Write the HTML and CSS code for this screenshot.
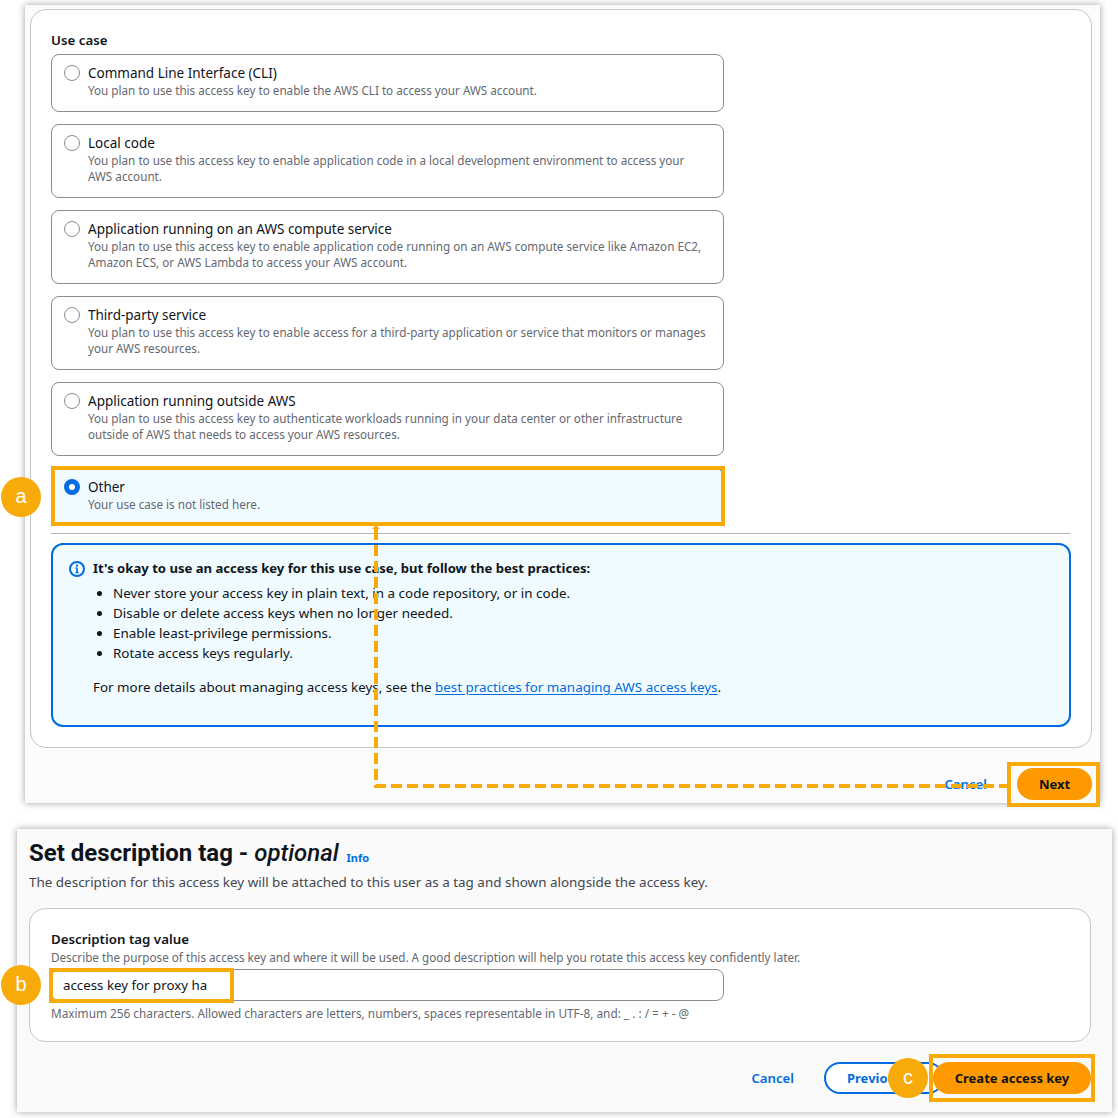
FILE: index.html
```html
<!DOCTYPE html>
<html lang="en">
<head>
<meta charset="utf-8">
<title>Create access key</title>
<link rel="stylesheet" href="styles.css">
</head>
<body>
<main class="page">
  <section class="panel panel-top">
    <div class="card card-top">
      <div class="field-label field-label-use">Use case</div>
      <div class="options">
        <div class="option">
          <span class="radio"></span>
          <div class="option-text"><div class="option-title">Command Line Interface (CLI)</div><div class="option-desc">You plan to use this access key to enable the AWS CLI to access your AWS account.</div></div>
        </div>
        <div class="option">
          <span class="radio"></span>
          <div class="option-text"><div class="option-title">Local code</div><div class="option-desc">You plan to use this access key to enable application code in a local development environment to access your AWS account.</div></div>
        </div>
        <div class="option">
          <span class="radio"></span>
          <div class="option-text"><div class="option-title">Application running on an AWS compute service</div><div class="option-desc">You plan to use this access key to enable application code running on an AWS compute service like Amazon EC2, Amazon ECS, or AWS Lambda to access your AWS account.</div></div>
        </div>
        <div class="option">
          <span class="radio"></span>
          <div class="option-text"><div class="option-title">Third-party service</div><div class="option-desc">You plan to use this access key to enable access for a third-party application or service that monitors or manages your AWS resources.</div></div>
        </div>
        <div class="option">
          <span class="radio"></span>
          <div class="option-text"><div class="option-title">Application running outside AWS</div><div class="option-desc">You plan to use this access key to authenticate workloads running in your data center or other infrastructure outside of AWS that needs to access your AWS resources.</div></div>
        </div>
        <div class="option option-selected">
          <span class="radio radio-on"></span>
          <div class="option-text"><div class="option-title">Other</div><div class="option-desc">Your use case is not listed here.</div></div>
        </div>
      </div>
      <hr class="divider">
      <div class="alert">
        <svg class="alert-icon" viewBox="0 0 16 16" width="16" height="16" aria-hidden="true"><circle cx="8" cy="8" r="7" fill="none" stroke="#006ce0" stroke-width="2"/><path d="M8 7v4.5M6.4 11.5h3.2M6.6 7H8" fill="none" stroke="#006ce0" stroke-width="1.6"/><rect x="7" y="3.6" width="2" height="2" fill="#006ce0"/></svg>
        <div class="alert-body">
          <div class="alert-title">It's okay to use an access key for this use case, but follow the best practices:</div>
          <ul class="alert-list">
            <li>Never store your access key in plain text, in a code repository, or in code.</li>
            <li>Disable or delete access keys when no longer needed.</li>
            <li>Enable least-privilege permissions.</li>
            <li>Rotate access keys regularly.</li>
          </ul>
          <p class="alert-more">For more details about managing access keys, see the <a class="alert-link" href="#">best practices for managing AWS access keys</a>.</p>
        </div>
      </div>
    </div>
    <div class="actions actions-top">
      <a class="link-btn" href="#">Cancel</a>
      <button class="btn btn-primary btn-next">Next</button>
    </div>
  </section>

  <section class="panel panel-bottom">
    <h1 class="heading">Set description tag - <em class="heading-opt">optional</em> <a class="info" href="#">Info</a></h1>
    <p class="heading-desc">The description for this access key will be attached to this user as a tag and shown alongside the access key.</p>
    <div class="card card-bottom">
      <div class="field-label field-label-tag">Description tag value</div>
      <div class="field-desc">Describe the purpose of this access key and where it will be used. A good description will help you rotate this access key confidently later.</div>
      <div class="input">access key for proxy ha</div>
      <div class="field-desc field-hint">Maximum 256 characters. Allowed characters are letters, numbers, spaces representable in UTF-8, and: _ . : / = + - @</div>
    </div>
    <div class="actions actions-bottom">
      <a class="link-btn link-bold" href="#">Cancel</a>
      <button class="btn btn-secondary">Previous</button>
      <button class="btn btn-primary btn-create">Create access key</button>
    </div>
  </section>

  <svg class="connector" width="1118" height="1118" viewBox="0 0 1118 1118" aria-hidden="true">
    <path d="M376 525l4 4h-2v3h-4v-3h-2z" fill="#f8ab08"/>
    <path d="M376 529V786H1008" fill="none" stroke="#f8ab08" stroke-width="4" stroke-dasharray="11 5"/>
  </svg>
  <div class="mark mark-a"></div>
  <div class="mark mark-next"></div>
  <div class="mark mark-b"></div>
  <div class="mark mark-create"></div>
  <div class="step step-a">a</div>
  <div class="step step-b">b</div>
  <div class="step step-c">c</div>
</main>
</body>
</html>
```
FILE: styles.css
```css
* { box-sizing: border-box; }
html, body { margin: 0; padding: 0; background: #fff; }
.page {
  position: relative;
  width: 1118px;
  height: 1118px;
  overflow: hidden;
  font-family: "Noto Sans", "Open Sans", sans-serif;
  color: #0f141a;
  padding-top: 5px;
}
.panel {
  background: #fcfcfc;
  box-shadow: 0 0 7px rgba(0, 0, 0, 0.38);
}
.panel-top {
  width: 1075px;
  height: 798px;
  margin-left: 25px;
  padding: 4px 8px 0 5px;
}
.panel-bottom {
  width: 1095px;
  height: 283px;
  margin: 26px 0 0 17px;
  padding: 11px 21px 0 12px;
  background: #fafafa;
}
.card {
  background: #fff;
  border: 1px solid #c6c6cd;
  border-radius: 16px;
}
.card-top {
  width: 1062px;
  height: 739px;
  padding: 21px 20px 0 20px;
}
.card-bottom {
  height: 134px;
  padding: 21px 20px 0 21px;
  margin-top: 18px;
}
.field-label {
  font-size: 13.300px;
  font-weight: 600;
  line-height: 18px;
}
.field-label-use { margin-bottom: 5px; }
.field-label-tag { margin-bottom: 1px; }
.options {
  width: 673px;
  display: flex;
  flex-direction: column;
  gap: 12px;
}
.option {
  display: flex;
  gap: 8px;
  border: 1px solid #8c8c94;
  border-radius: 8px;
  padding: 9px 14px 13px 12px;
  background: #fff;
}
.option-selected {
  background: #f0fbff;
  border-color: #006ce0;
}
.radio {
  flex: none;
  width: 16px;
  height: 16px;
  margin-top: 1px;
  border-radius: 50%;
  border: 1px solid #8c8c94;
  background: #fff;
}
.radio-on {
  border: 5px solid #006ce0;
}
.option-text { min-width: 0; flex: 1; }
.option-title {
  font-size: 13.500px;
  line-height: 18px;
}
.option-desc {
  font-size: 11.700px;
  line-height: 16px;
  color: #656871;
}
.divider {
  width: 1019px;
  height: 1px;
  border: 0;
  background: #b4b4bb;
  margin: 7px 0 9px;
}
.alert {
  width: 1020px;
  height: 184px;
  display: flex;
  gap: 8px;
  border: 2px solid #006ce0;
  border-radius: 12px;
  background: #f0fbff;
  padding: 14px 16px 0;
}
.alert-icon { flex: none; margin-top: 2px; }
.alert-body { flex: 1; }
.alert-title {
  font-size: 13.100px;
  font-weight: 700;
  line-height: 18px;
}
.alert-list {
  margin: 6px 0 0;
  padding-left: 20px;
  list-style: none;
  font-size: 13.450px;
  line-height: 20px;
}
.alert-list li::before {
  content: "";
  display: inline-block;
  width: 5px;
  height: 5px;
  margin: 0 11px 2px -16px;
  border-radius: 50%;
  background: #0f141a;
  vertical-align: middle;
}
.alert-more {
  margin: 14px 0 0;
  font-size: 13.400px;
  line-height: 20px;
}
.alert-link {
  color: #006ce0;
  text-decoration: underline;
  text-underline-offset: 2px;
}
.actions {
  display: flex;
  justify-content: flex-end;
  align-items: center;
}
.actions-top { margin-top: 20px; }
.actions-bottom { margin-top: 20px; }
.link-btn {
  font-size: 13.200px;
  font-weight: 600;
  color: #006ce0;
  text-decoration: none;
  line-height: 32px;
}
.btn {
  font-family: inherit;
  font-size: 13px;
  font-weight: 700;
  height: 32px;
  border-radius: 16px;
  padding: 0 20px;
  border: 0;
  color: #0f141a;
  white-space: nowrap;
}
.btn-primary { background: #ff9900; }
.btn-next { width: 75px; margin-left: 30px; padding: 0; }
.btn-secondary {
  width: 120px;
  margin-left: 30px;
  background: #fff;
  border: 2px solid #006ce0;
  color: #006ce0;
  text-align: left;
  padding-left: 21px;
}
.btn-create { width: 158px; margin-left: -11px; padding: 0; position: relative; }
.heading {
  margin: 0;
  font-family: Roboto, "Noto Sans", sans-serif;
  font-size: 24px;
  font-weight: 700;
  line-height: 26px;
}
.heading-opt { font-weight: 500; font-style: italic; letter-spacing: -0.05px; }
.info {
  font-family: "Noto Sans", sans-serif;
  font-size: 11px;
  font-weight: 700;
  color: #006ce0;
  text-decoration: none;
  margin-left: 2px;
  vertical-align: -1px;
}
.heading-desc {
  margin: 0;
  padding-top: 3px;
  font-size: 13.450px;
  line-height: 16px;
  color: #424650;
}
.field-desc {
  font-size: 11.700px;
  line-height: 16px;
  color: #656871;
}
.input {
  width: 673px;
  height: 32px;
  margin-top: 4px;
  border: 1px solid #8c8c94;
  border-radius: 8px;
  background: #fff;
  font-size: 13.300px;
  line-height: 30px;
  padding-left: 11px;
}
.field-hint { margin-top: 4px; font-size: 11.800px; }
.connector {
  position: absolute;
  left: 0;
  top: 0;
  pointer-events: none;
}
.mark {
  position: absolute;
  border: 4px solid #f8ab08;
}
.mark-a { left: 51px; top: 466px; width: 674px; height: 60px; }
.mark-next { left: 1007px; top: 762px; width: 93px; height: 45px; }
.mark-b { left: 49px; top: 968px; width: 185px; height: 35px; }
.mark-create { left: 929px; top: 1054px; width: 166px; height: 48px; }
.step {
  position: absolute;
  width: 40px;
  height: 40px;
  border-radius: 50%;
  background: #f8ab08;
  color: #fff;
  font-family: "Liberation Sans", sans-serif;
  font-size: 20px;
  line-height: 38px;
  text-align: center;
}
.step-a { left: 1px; top: 477px; }
.step-b { left: 1px; top: 965px; }
.step-c { left: 888px; top: 1058px; }
```
